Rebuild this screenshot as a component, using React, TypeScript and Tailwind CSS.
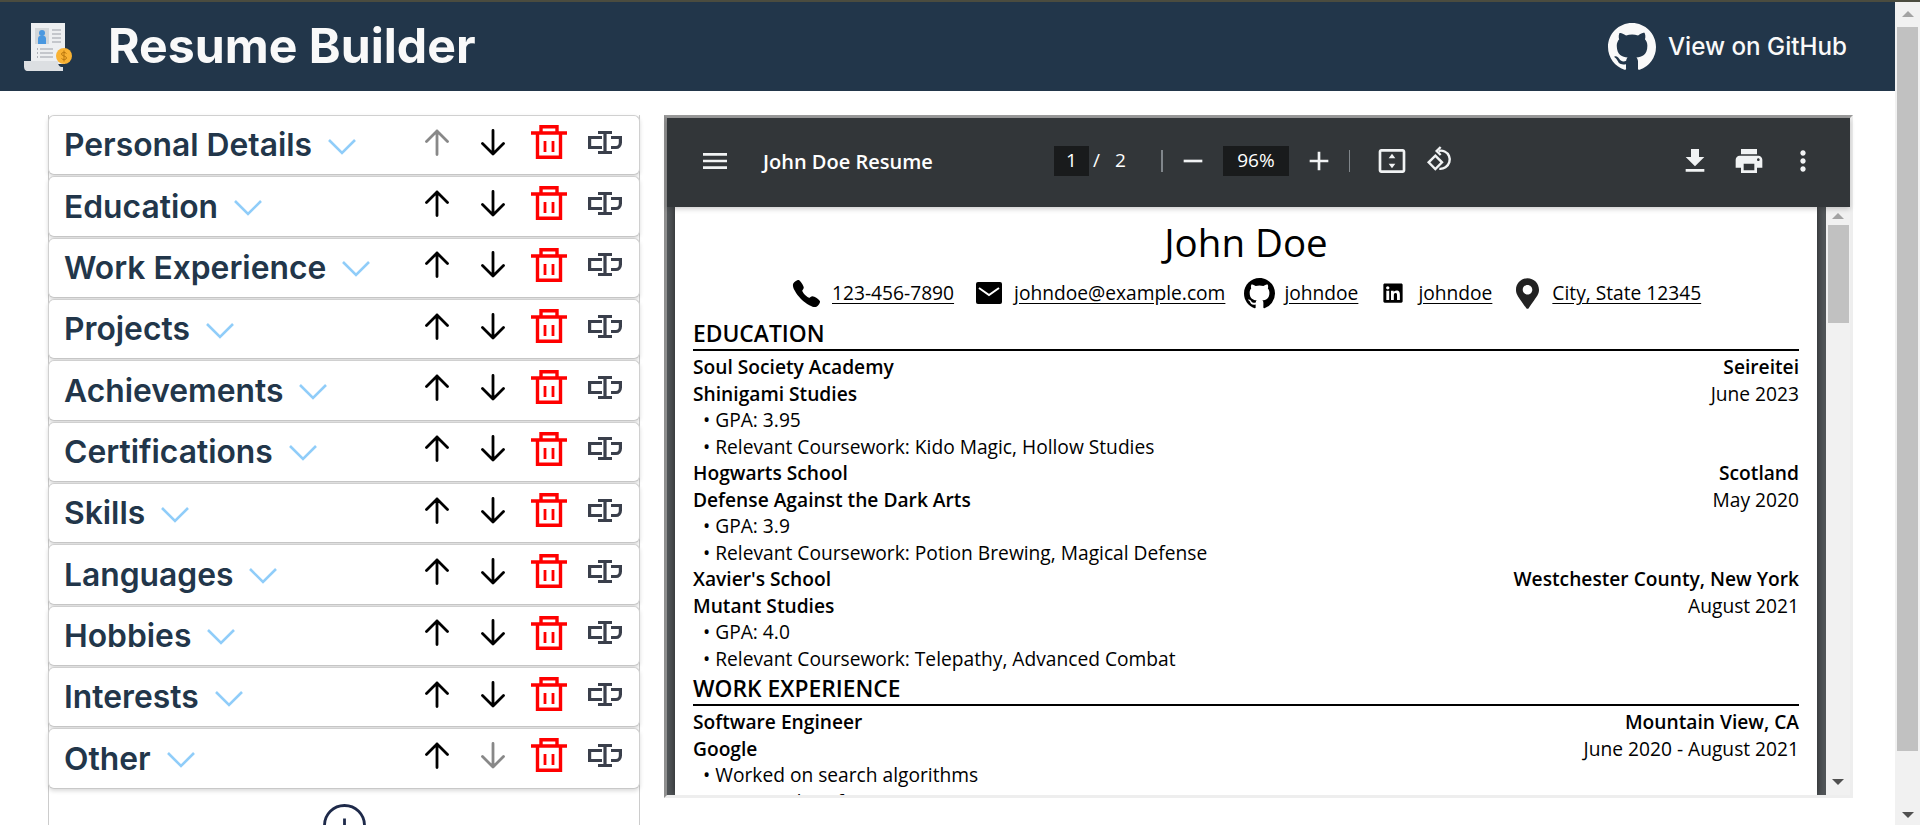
import type { ReactNode } from "react";
import { FaLinkedin, FaMapMarkerAlt } from "react-icons/fa";
import { IoCall } from "react-icons/io5";

const sections = [
  "Personal Details",
  "Education",
  "Work Experience",
  "Projects",
  "Achievements",
  "Certifications",
  "Skills",
  "Languages",
  "Hobbies",
  "Interests",
  "Other",
];

const githubPath =
  "M8 0C3.58 0 0 3.58 0 8c0 3.54 2.29 6.53 5.47 7.59.4.07.55-.17.55-.38 0-.19-.01-.82-.01-1.49-2.01.37-2.53-.49-2.69-.94-.09-.23-.48-.94-.82-1.13-.28-.15-.68-.52-.01-.53.63-.01 1.08.58 1.23.82.72 1.21 1.87.87 2.33.66.07-.52.28-.87.51-1.07-1.78-.2-3.64-.89-3.64-3.95 0-.87.31-1.59.82-2.15-.08-.2-.36-1.02.08-2.12 0 0 .67-.21 2.2.82.64-.18 1.32-.27 2-.27.68 0 1.36.09 2 .27 1.53-1.04 2.2-.82 2.2-.82.44 1.1.16 1.92.08 2.12.51.56.82 1.27.82 2.15 0 3.07-1.87 3.75-3.65 3.95.29.25.54.73.54 1.48 0 1.07-.01 1.93-.01 2.2 0 .21.15.46.55.38A8.013 8.013 0 0016 8c0-4.42-3.58-8-8-8z";

function GithubMark({ className }: { className: string }) {
  return (
    <svg viewBox="0 0 16 16" className={className} fill="currentColor">
      <path fillRule="evenodd" d={githubPath} />
    </svg>
  );
}

function Logo() {
  return (
    <svg viewBox="0 0 48 48" className="w-12 h-12 shrink-0">
      <rect x="7" y="0" width="34" height="41" fill="#edeff1" />
      <path d="M0 38h34c0 4 1 6 5 6v4H4c-3 0-4-2-4-5z" fill="#dcdfe2" />
      <rect x="11" y="5" width="14" height="16" fill="#d3d7da" />
      <circle cx="18" cy="10" r="3" fill="#4a98e0" />
      <path d="M14 21v-5c0-3 2-3.500 4-3.500s4 .5 4 3.500v5z" fill="#4a98e0" />
      <path d="M28 7h9M28 11h9M28 15h9M28 19h9" stroke="#b6bbc0" strokeWidth="1.500" />
      <path d="M16 26h13M16 30h13M16 34h13" stroke="#b6bbc0" strokeWidth="1.500" />
      <path d="M13 26h1M13 30h1M13 34h1" stroke="#9aa0a6" strokeWidth="1.500" />
      <circle cx="40" cy="33" r="8" fill="#f9b233" />
      <path d="M42.500 30.500c-1-1.500-5-1.500-5 .5 0 2.500 5 1.500 5 4 0 2-4 2-5 .5M40 27.500v11" stroke="#b9770e" strokeWidth="1" fill="none" />
    </svg>
  );
}

function ArrowIcon({ up, muted }: { up: boolean; muted: boolean }) {
  return (
    <svg
      viewBox="0 0 24 27"
      className={`w-6 h-[27px] ${muted ? "text-[#888888]" : "text-black"}`}
      fill="none"
      stroke="currentColor"
      strokeWidth="2.800"
      strokeLinecap="round"
      strokeLinejoin="round"
    >
      {up ? <path d="M12 25.500V2M1.500 12.500L12 2l10.500 10.500" /> : <path d="M12 1.500V25M1.500 14.500L12 25l10.500-10.500" />}
    </svg>
  );
}

function TrashIcon() {
  return (
    <svg viewBox="0 0 36 34" className="w-9 h-[34px]" fill="none" stroke="#ff0000" strokeWidth="3.400">
      <path d="M0 8h36M6.500 8v24.300h23V8M10 8V1.700h16V8" />
      <path d="M14 16v11M22 16v11" strokeWidth="2.800" />
    </svg>
  );
}

function RenameIcon() {
  return (
    <svg viewBox="0 0 34 23" className="w-[34px] h-[23px]" fill="none" stroke="#3a3f4b" strokeWidth="3.200">
      <path d="M14 6.500H1.600v10H14M23 6.500h9.400v5c0 3-2 5-4.400 5h-5M10 1.500h14M17 1.500v20M10 21.500h14" />
    </svg>
  );
}

function SectionRow({ name, index }: { name: string; index: number }) {
  return (
    <div className="h-[61.33px] shrink-0 pb-px -mx-px">
      <div className="h-full flex items-center justify-between pl-[15px] pr-[6px] rounded-md bg-white border border-[#d0d0d0] border-b-[#c8c8c8] shadow-[0_2px_4px_rgba(0,0,0,0.15)]">
        <div className="flex items-center gap-4">
          <span className="text-[31.8px] font-semibold text-[#22364a]">{name}</span>
          <svg viewBox="0 0 28 16" className="w-7 h-4 mt-[3px]" fill="none" stroke="#90cdf9" strokeWidth="2.600">
            <path d="M1 1l13 13L27 1" />
          </svg>
        </div>
        <div className="flex mb-[6px]">
          <div className="w-14 flex justify-center items-center">
            <ArrowIcon up muted={index === 0} />
          </div>
          <div className="w-14 flex justify-center items-center">
            <ArrowIcon up={false} muted={index === sections.length - 1} />
          </div>
          <div className="w-14 flex justify-center items-center">
            <TrashIcon />
          </div>
          <div className="w-14 flex justify-center items-center">
            <RenameIcon />
          </div>
        </div>
      </div>
    </div>
  );
}

function ToolIcon({ d, className = "" }: { d: string; className?: string }) {
  return (
    <svg viewBox="0 0 24 24" className={`w-8 h-8 shrink-0 ${className}`} fill="#f1f3f4">
      <path d={d} />
    </svg>
  );
}

function Toolbar() {
  return (
    <div className="h-[89px] shrink-0 pb-[4px] bg-[#323639] flex items-center text-white relative z-10 shadow-[0_2px_5px_rgba(0,0,0,0.2)]">
      <ToolIcon d="M3 18h18v-2H3v2zm0-5h18v-2H3v2zm0-7v2h18V6H3z" className="ml-[32px]" />
      <span className="ml-[32px] pt-[2px] w-[291px] shrink-0 text-[20px] font-semibold">John Doe Resume</span>
      <span className="w-[35px] h-[30px] bg-[#191b1c] flex items-center justify-center text-[19px]">1</span>
      <span className="ml-[4px] text-[19px]">/</span>
      <span className="ml-[15px] text-[19px] w-[46px]">2</span>
      <span className="w-[2px] h-[22px] bg-[#80868b]" />
      <ToolIcon d="M19 13H5v-2h14v2z" className="ml-[14px]" />
      <span className="ml-[14px] w-[66px] h-[30px] bg-[#191b1c] flex items-center justify-center text-[19px]">96%</span>
      <ToolIcon d="M19 13h-6v6h-2v-6H5v-2h6V5h2v6h6v2z" className="ml-[14px]" />
      <span className="ml-[14px] w-[1px] h-[22px] bg-[#80868b]" />
      <ToolIcon d="M20 3H4c-1.100 0-2 .9-2 2v14c0 1.100.9 2 2 2h16c1.100 0 2-.9 2-2V5c0-1.100-.9-2-2-2zm0 16H4V5h16v14zM12 6.500L9.500 10h5zM12 17.500L9.500 14h5z" className="ml-[26px]" />
      <svg viewBox="0 0 24 24" className="w-8 h-8 shrink-0 ml-[16px]" fill="none" stroke="#f1f3f4" strokeWidth="1.800">
        <path d="M8.500 8L13.500 13L8.500 18L3.500 13z" />
        <path d="M11 4.500c1.500-.5 3-.3 4.500.4 3 1.400 4.500 4.800 3.500 8-1 3.300-4.200 5.300-7.500 5" />
        <path d="M12.500 1.500L9.500 4.500l3 3" />
      </svg>
      <div className="flex-1" />
      <ToolIcon d="M19 9h-4V3H9v6H5l7 7 7-7zM5 18v2h14v-2H5z" />
      <ToolIcon d="M19 8H5c-1.660 0-3 1.340-3 3v6h4v4h12v-4h4v-6c0-1.660-1.340-3-3-3zm-3 11H8v-5h8v5zm3-7c-.55 0-1-.45-1-1s.45-1 1-1 1 .45 1 1-.45 1-1 1zm-1-9H6v4h12V3z" className="ml-[22px]" />
      <ToolIcon d="M12 8c1.100 0 2-.9 2-2s-.9-2-2-2-2 .9-2 2 .9 2 2 2zm0 2c-1.100 0-2 .9-2 2s.9 2 2 2 2-.9 2-2-.9-2-2-2zm0 6c-1.100 0-2 .9-2 2s.9 2 2 2 2-.9 2-2-.9-2-2-2z" className="ml-[22px] mr-[31px]" />
    </div>
  );
}

function Arrow({ up }: { up: boolean }) {
  return (
    <div
      className={`w-0 h-0 border-x-[6px] border-x-transparent ${
        up ? "border-b-[6px] border-b-[#a3a3a3]" : "border-t-[6px] border-t-[#505050]"
      }`}
    />
  );
}

function Row({ left, right, bold }: { left: string; right?: string; bold?: boolean }) {
  return (
    <div className={`flex justify-between h-[26.5px] ${bold ? "font-semibold" : ""}`}>
      <span className="font-semibold">{left}</span>
      {right && <span>{right}</span>}
    </div>
  );
}

function Bullet({ text }: { text: string }) {
  return (
    <div className="h-[26.5px] pl-[10px] flex gap-[5px]">
      <span>•</span>
      <span>{text}</span>
    </div>
  );
}

function Heading({ text }: { text: string }) {
  return (
    <div className="h-[33px] mt-[1px] mb-[3px] border-b-2 border-black text-[22.8px] font-semibold leading-[32px]">{text}</div>
  );
}

function Contact({ icon, text, className }: { icon: ReactNode; text: string; className: string }) {
  return (
    <div className={`flex items-center ${className}`}>
      {icon}
      <span className="underline underline-offset-[3px]">{text}</span>
    </div>
  );
}

function ResumePage() {
  return (
    <div className="flex-1 min-w-0 bg-white px-[18px] pt-[10px] overflow-hidden relative shadow-[0_0_8px_rgba(0,0,0,0.6)] text-black text-[19.2px] leading-[26.5px]">
      <div className="text-center text-[38.5px] leading-[50px] h-[50px]">John Doe</div>
      <div className="flex h-[36px] mt-[8px] mb-[7px] pl-[98px]">
        <Contact icon={<IoCall className="w-[31px] h-[31px] mr-[10px]" />} text="123-456-7890" className="mr-[22px]" />
        <Contact
          icon={
            <svg viewBox="0 0 26 22" className="w-[26px] h-[22px] mr-[12px]">
              <rect width="26" height="22" rx="2" fill="#000" />
              <path d="M3 6l10 7 10-7" stroke="#fff" strokeWidth="2" fill="none" />
            </svg>
          }
          text="johndoe@example.com"
          className="mr-[19px]"
        />
        <Contact icon={<GithubMark className="w-[31px] h-[31px] mr-[9px]" />} text="johndoe" className="mr-[24px]" />
        <Contact icon={<FaLinkedin className="w-[22px] h-[22px] mr-[14px]" />} text="johndoe" className="mr-[24px]" />
        <Contact icon={<FaMapMarkerAlt className="w-[23px] h-[31px] mr-[13px] text-[#222222]" />} text="City, State 12345" className="" />
      </div>

      <Heading text="EDUCATION" />
      <Row left="Soul Society Academy" right="Seireitei" bold />
      <Row left="Shinigami Studies" right="June 2023" />
      <Bullet text="GPA: 3.95" />
      <Bullet text="Relevant Coursework: Kido Magic, Hollow Studies" />
      <Row left="Hogwarts School" right="Scotland" bold />
      <Row left="Defense Against the Dark Arts" right="May 2020" />
      <Bullet text="GPA: 3.9" />
      <Bullet text="Relevant Coursework: Potion Brewing, Magical Defense" />
      <Row left="Xavier's School" right="Westchester County, New York" bold />
      <Row left="Mutant Studies" right="August 2021" />
      <Bullet text="GPA: 4.0" />
      <Bullet text="Relevant Coursework: Telepathy, Advanced Combat" />

      <Heading text="WORK EXPERIENCE" />
      <Row left="Software Engineer" right="Mountain View, CA" bold />
      <Row left="Google" right="June 2020 - August 2021" />
      <Bullet text="Worked on search algorithms" />
      <Bullet text="Improved performance" />
    </div>
  );
}

function PdfViewer() {
  return (
    <div className="w-[1189px] h-[683px] shrink-0 border-[3px] border-t-[#9a9a9a] border-l-[#8f8f8f] border-r-[#eeeeee] border-b-[#eeeeee] flex flex-col font-['Open_Sans',sans-serif]">
      <Toolbar />
      <div className="flex-1 min-h-0 flex">
        <div className="flex-1 min-w-0 flex bg-[#525659] pl-2 pr-[9px] overflow-hidden">
          <ResumePage />
        </div>
        <div className="w-[24px] shrink-0 bg-[#f1f1f1] flex flex-col items-center pt-[6px]">
          <Arrow up />
          <div className="w-[21px] h-[98px] bg-[#c1c1c1] mt-[6px]" />
          <div className="flex-1" />
          <Arrow up={false} />
          <div className="h-[10px]" />
        </div>
      </div>
    </div>
  );
}

export default function App() {
  return (
    <div className="h-[825px] overflow-hidden flex flex-col bg-white font-['Inter',sans-serif]">
      <div className="h-[2px] shrink-0 bg-[#4b4c3f]" />
      <div className="flex-1 min-h-0 flex">
        <div className="flex-1 min-w-0 flex flex-col">
          <header className="h-[89px] shrink-0 bg-[#22364a] flex items-center pl-6 pr-[48px] text-[#f9f9f9]">
            <Logo />
            <h1 className="ml-[36px] text-[48.2px] font-bold">Resume Builder</h1>
            <div className="flex-1" />
            <GithubMark className="w-12 h-12" />
            <span className="ml-3 mt-[1px] text-[24.2px] font-medium">View on GitHub</span>
          </header>
          <div className="flex-1 min-h-0 flex pl-[48px] pt-[24px] gap-[24px]">
            <aside className="w-[592px] shrink-0 border-x border-[#cccccc] flex flex-col">
              {sections.map((s, i) => (
                <SectionRow key={s} name={s} index={i} />
              ))}
              <div className="flex justify-center pt-[14px]">
                <svg viewBox="0 0 43 43" className="w-[43px] h-[43px] shrink-0" fill="none" stroke="#1e2a4a" strokeWidth="2.800">
                  <circle cx="21.500" cy="21.500" r="20" />
                  <path d="M21.500 14.500v14M14.500 23.500h14" />
                </svg>
              </div>
            </aside>
            <PdfViewer />
          </div>
        </div>
        <div className="w-[25px] shrink-0 bg-[#f1f1f1] flex flex-col items-center pt-[9px]">
          <Arrow up />
          <div className="w-[21px] h-[724px] bg-[#c1c1c1] mt-[10px]" />
          <div className="flex-1" />
          <Arrow up={false} />
          <div className="h-[7px]" />
        </div>
      </div>
    </div>
  );
}
